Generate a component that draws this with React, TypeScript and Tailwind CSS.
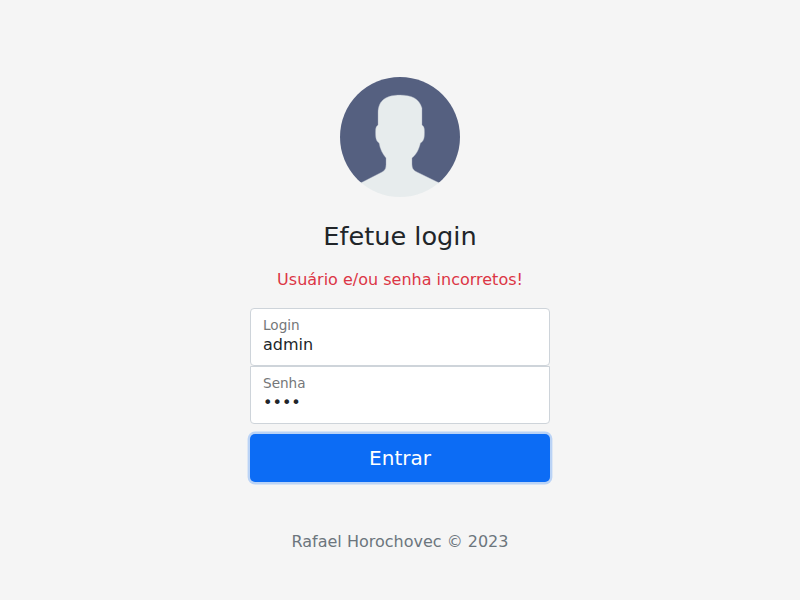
import React from "react";

function Avatar() {
  return (
    <svg className="mb-6 block" width="120" height="120" viewBox="0 0 120 120">
      <defs>
        <clipPath id="upper">
          <rect width="120" height="105.5" />
        </clipPath>
        <clipPath id="disc">
          <circle cx="60" cy="60" r="60" />
        </clipPath>
      </defs>
      <circle cx="60" cy="60" r="60" fill="#556080" clipPath="url(#upper)" />
      <path
        clipPath="url(#disc)"
        fill="#e7eced"
        stroke="#a2a9ba"
        strokeWidth="0.4"
        d="M60 18C71 18 79 21 82 31V48C84 49 84.500 51 84.500 55C84.500 61 84 64 80.500 66C79 72 77 77 72 81V86C72 91 73 93 77 95L98.500 105.500V121H21.500V105.500L42 95C45.500 93 46 91 46 86V81C42.500 77 40 72 39 66C36 64 35.500 61 35.500 55C35.500 51 36 49 38 48V36C38 22 48 18 60 18Z"
      />
    </svg>
  );
}

export default function App() {
  return (
    <div className="flex h-[600px] items-center justify-center bg-[#f5f5f5] font-['DejaVu_Sans',sans-serif] text-base leading-6 text-[#212529]">
      <main className="flex w-[300px] flex-col items-center pt-[31px]">
        <Avatar />
        <h1 className="mb-4 text-[25.6px] leading-[31px]">Efetue login</h1>
        <p className="mb-4 text-[#dc3545]">Usuário e/ou senha incorretos!</p>
        <form className="flex w-full flex-col" onSubmit={(e) => e.preventDefault()}>
          <label className="h-[58px] rounded-[4px] border border-[#ced4da] bg-white px-3 pt-2">
            <span className="block text-[13.6px] leading-4 text-[#757779]">Login</span>
            <input className="block h-6 w-full bg-transparent outline-none" defaultValue="admin" />
          </label>
          <label className="mb-[10px] h-[58px] rounded-b-[4px] border border-[#ced4da] bg-white px-3 pt-2">
            <span className="block text-[13.6px] leading-4 text-[#757779]">Senha</span>
            <input type="password" className="block h-6 w-full bg-transparent outline-none" defaultValue="1234" />
          </label>
          <button className="h-12 rounded-[5px] bg-[#0c6cf5] text-xl text-white shadow-[0_0_0_2.4px_rgba(13,110,253,0.25)]">Entrar</button>
        </form>
        <p className="mt-12 text-[#6c757d]">Rafael Horochovec © 2023</p>
      </main>
    </div>
  );
}
